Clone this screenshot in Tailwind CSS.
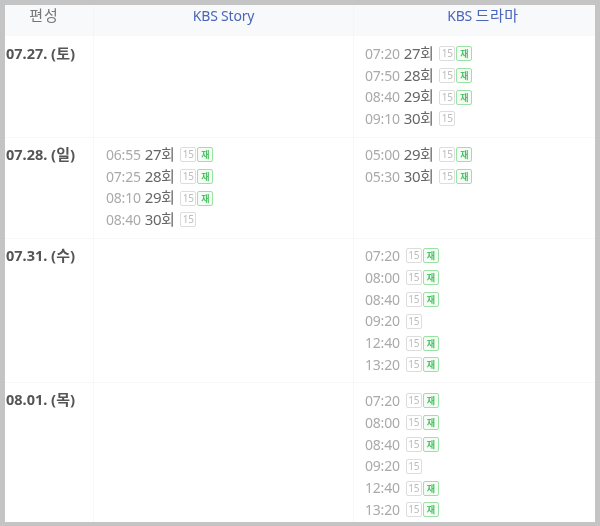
<!DOCTYPE html>
<html lang="ko"><head><meta charset="utf-8"><script src="https://cdn.jsdelivr.net/npm/@tailwindcss/browser@4"></script></head>
<body class="m-0 bg-[#c4c4c4]">
<div class="w-[600px] h-[526px] overflow-hidden pt-[5px] pl-[5px] pr-[5px] pb-[4px] font-['Noto_Sans','Noto_Sans_CJK_KR',sans-serif] text-[14px] leading-[21.7px] tracking-[-0.2px]">
<div class="bg-white h-full overflow-hidden blur-[0.5px] grid grid-cols-[89px_260px_241px] grid-rows-[31px_102px_101px_144px_140px]">
  <div class="bg-[#f8f9fb] border-r border-[#f4f5f7] text-center text-[#777] pr-[10px] text-[15px] tracking-[1px]">편성</div>
  <div class="bg-[#f8f9fb] border-r border-[#f4f5f7] text-center text-[#4a66b8]">KBS Story</div>
  <div class="bg-[#f8f9fb] text-center text-[#4a66b8] pl-[17px]">KBS <span class="text-[15px] tracking-[0.6px]">드라마</span></div>

  <div class="border-r border-b border-[#f7f7f7] pl-[1px] pt-[7px] font-bold text-[#555] text-[14.5px] tracking-[0px]">07.27. <span class="text-[15px]">(토)</span></div>
  <div class="border-r border-b border-[#f7f7f7]"></div>
  <div class="border-b border-[#f7f7f7] pl-[11px] pt-[7px]">
    <div class="flex items-center h-[21.7px]"><span class="text-[#aaa]">07:20</span><span class="text-[#666] ml-[4px] text-[15px] tracking-[-0.5px]">27회</span><span class="ml-[6px] flex gap-[1px]"><span class="w-[16px] h-[15px] border border-[#ddd] rounded-[2px] text-[#bbb] text-[10px] leading-[13px] text-center">15</span><span class="w-[16px] h-[15px] border border-[#9be3a5] bg-[#f4fcf5] rounded-[2px] text-[#4cc064] text-[9px] font-bold leading-[13px] text-center">재</span></span></div>
    <div class="flex items-center h-[21.7px]"><span class="text-[#aaa]">07:50</span><span class="text-[#666] ml-[4px] text-[15px] tracking-[-0.5px]">28회</span><span class="ml-[6px] flex gap-[1px]"><span class="w-[16px] h-[15px] border border-[#ddd] rounded-[2px] text-[#bbb] text-[10px] leading-[13px] text-center">15</span><span class="w-[16px] h-[15px] border border-[#9be3a5] bg-[#f4fcf5] rounded-[2px] text-[#4cc064] text-[9px] font-bold leading-[13px] text-center">재</span></span></div>
    <div class="flex items-center h-[21.7px]"><span class="text-[#aaa]">08:40</span><span class="text-[#666] ml-[4px] text-[15px] tracking-[-0.5px]">29회</span><span class="ml-[6px] flex gap-[1px]"><span class="w-[16px] h-[15px] border border-[#ddd] rounded-[2px] text-[#bbb] text-[10px] leading-[13px] text-center">15</span><span class="w-[16px] h-[15px] border border-[#9be3a5] bg-[#f4fcf5] rounded-[2px] text-[#4cc064] text-[9px] font-bold leading-[13px] text-center">재</span></span></div>
    <div class="flex items-center h-[21.7px]"><span class="text-[#aaa]">09:10</span><span class="text-[#666] ml-[4px] text-[15px] tracking-[-0.5px]">30회</span><span class="ml-[6px] flex gap-[1px]"><span class="w-[16px] h-[15px] border border-[#ddd] rounded-[2px] text-[#bbb] text-[10px] leading-[13px] text-center">15</span></span></div>
  </div>

  <div class="border-r border-b border-[#f7f7f7] pl-[1px] pt-[6px] font-bold text-[#555] text-[14.5px] tracking-[0px]">07.28. <span class="text-[15px]">(일)</span></div>
  <div class="border-r border-b border-[#f7f7f7] pl-[12px] pt-[6px]">
    <div class="flex items-center h-[21.7px]"><span class="text-[#aaa]">06:55</span><span class="text-[#666] ml-[4px] text-[15px] tracking-[-0.5px]">27회</span><span class="ml-[6px] flex gap-[1px]"><span class="w-[16px] h-[15px] border border-[#ddd] rounded-[2px] text-[#bbb] text-[10px] leading-[13px] text-center">15</span><span class="w-[16px] h-[15px] border border-[#9be3a5] bg-[#f4fcf5] rounded-[2px] text-[#4cc064] text-[9px] font-bold leading-[13px] text-center">재</span></span></div>
    <div class="flex items-center h-[21.7px]"><span class="text-[#aaa]">07:25</span><span class="text-[#666] ml-[4px] text-[15px] tracking-[-0.5px]">28회</span><span class="ml-[6px] flex gap-[1px]"><span class="w-[16px] h-[15px] border border-[#ddd] rounded-[2px] text-[#bbb] text-[10px] leading-[13px] text-center">15</span><span class="w-[16px] h-[15px] border border-[#9be3a5] bg-[#f4fcf5] rounded-[2px] text-[#4cc064] text-[9px] font-bold leading-[13px] text-center">재</span></span></div>
    <div class="flex items-center h-[21.7px]"><span class="text-[#aaa]">08:10</span><span class="text-[#666] ml-[4px] text-[15px] tracking-[-0.5px]">29회</span><span class="ml-[6px] flex gap-[1px]"><span class="w-[16px] h-[15px] border border-[#ddd] rounded-[2px] text-[#bbb] text-[10px] leading-[13px] text-center">15</span><span class="w-[16px] h-[15px] border border-[#9be3a5] bg-[#f4fcf5] rounded-[2px] text-[#4cc064] text-[9px] font-bold leading-[13px] text-center">재</span></span></div>
    <div class="flex items-center h-[21.7px]"><span class="text-[#aaa]">08:40</span><span class="text-[#666] ml-[4px] text-[15px] tracking-[-0.5px]">30회</span><span class="ml-[6px] flex gap-[1px]"><span class="w-[16px] h-[15px] border border-[#ddd] rounded-[2px] text-[#bbb] text-[10px] leading-[13px] text-center">15</span></span></div>
  </div>
  <div class="border-b border-[#f7f7f7] pl-[11px] pt-[6px]">
    <div class="flex items-center h-[21.7px]"><span class="text-[#aaa]">05:00</span><span class="text-[#666] ml-[4px] text-[15px] tracking-[-0.5px]">29회</span><span class="ml-[6px] flex gap-[1px]"><span class="w-[16px] h-[15px] border border-[#ddd] rounded-[2px] text-[#bbb] text-[10px] leading-[13px] text-center">15</span><span class="w-[16px] h-[15px] border border-[#9be3a5] bg-[#f4fcf5] rounded-[2px] text-[#4cc064] text-[9px] font-bold leading-[13px] text-center">재</span></span></div>
    <div class="flex items-center h-[21.7px]"><span class="text-[#aaa]">05:30</span><span class="text-[#666] ml-[4px] text-[15px] tracking-[-0.5px]">30회</span><span class="ml-[6px] flex gap-[1px]"><span class="w-[16px] h-[15px] border border-[#ddd] rounded-[2px] text-[#bbb] text-[10px] leading-[13px] text-center">15</span><span class="w-[16px] h-[15px] border border-[#9be3a5] bg-[#f4fcf5] rounded-[2px] text-[#4cc064] text-[9px] font-bold leading-[13px] text-center">재</span></span></div>
  </div>

  <div class="border-r border-b border-[#f7f7f7] pl-[1px] pt-[6px] font-bold text-[#555] text-[14.5px] tracking-[0px]">07.31. <span class="text-[15px]">(수)</span></div>
  <div class="border-r border-b border-[#f7f7f7]"></div>
  <div class="border-b border-[#f7f7f7] pl-[11px] pt-[6px]">
    <div class="flex items-center h-[21.8px]"><span class="text-[#aaa]">07:20</span><span class="ml-[6px] flex gap-[1px]"><span class="w-[16px] h-[15px] border border-[#ddd] rounded-[2px] text-[#bbb] text-[10px] leading-[13px] text-center">15</span><span class="w-[16px] h-[15px] border border-[#9be3a5] bg-[#f4fcf5] rounded-[2px] text-[#4cc064] text-[9px] font-bold leading-[13px] text-center">재</span></span></div>
    <div class="flex items-center h-[21.8px]"><span class="text-[#aaa]">08:00</span><span class="ml-[6px] flex gap-[1px]"><span class="w-[16px] h-[15px] border border-[#ddd] rounded-[2px] text-[#bbb] text-[10px] leading-[13px] text-center">15</span><span class="w-[16px] h-[15px] border border-[#9be3a5] bg-[#f4fcf5] rounded-[2px] text-[#4cc064] text-[9px] font-bold leading-[13px] text-center">재</span></span></div>
    <div class="flex items-center h-[21.8px]"><span class="text-[#aaa]">08:40</span><span class="ml-[6px] flex gap-[1px]"><span class="w-[16px] h-[15px] border border-[#ddd] rounded-[2px] text-[#bbb] text-[10px] leading-[13px] text-center">15</span><span class="w-[16px] h-[15px] border border-[#9be3a5] bg-[#f4fcf5] rounded-[2px] text-[#4cc064] text-[9px] font-bold leading-[13px] text-center">재</span></span></div>
    <div class="flex items-center h-[21.8px]"><span class="text-[#aaa]">09:20</span><span class="ml-[6px] flex gap-[1px]"><span class="w-[16px] h-[15px] border border-[#ddd] rounded-[2px] text-[#bbb] text-[10px] leading-[13px] text-center">15</span></span></div>
    <div class="flex items-center h-[21.8px]"><span class="text-[#aaa]">12:40</span><span class="ml-[6px] flex gap-[1px]"><span class="w-[16px] h-[15px] border border-[#ddd] rounded-[2px] text-[#bbb] text-[10px] leading-[13px] text-center">15</span><span class="w-[16px] h-[15px] border border-[#9be3a5] bg-[#f4fcf5] rounded-[2px] text-[#4cc064] text-[9px] font-bold leading-[13px] text-center">재</span></span></div>
    <div class="flex items-center h-[21.8px]"><span class="text-[#aaa]">13:20</span><span class="ml-[6px] flex gap-[1px]"><span class="w-[16px] h-[15px] border border-[#ddd] rounded-[2px] text-[#bbb] text-[10px] leading-[13px] text-center">15</span><span class="w-[16px] h-[15px] border border-[#9be3a5] bg-[#f4fcf5] rounded-[2px] text-[#4cc064] text-[9px] font-bold leading-[13px] text-center">재</span></span></div>
  </div>

  <div class="border-r border-[#f7f7f7] pl-[1px] pt-[6px] font-bold text-[#555] text-[14.5px] tracking-[0px]">08.01. <span class="text-[15px]">(목)</span></div>
  <div class="border-r border-[#f7f7f7]"></div>
  <div class="pl-[11px] pt-[7px]">
    <div class="flex items-center h-[21.8px]"><span class="text-[#aaa]">07:20</span><span class="ml-[6px] flex gap-[1px]"><span class="w-[16px] h-[15px] border border-[#ddd] rounded-[2px] text-[#bbb] text-[10px] leading-[13px] text-center">15</span><span class="w-[16px] h-[15px] border border-[#9be3a5] bg-[#f4fcf5] rounded-[2px] text-[#4cc064] text-[9px] font-bold leading-[13px] text-center">재</span></span></div>
    <div class="flex items-center h-[21.8px]"><span class="text-[#aaa]">08:00</span><span class="ml-[6px] flex gap-[1px]"><span class="w-[16px] h-[15px] border border-[#ddd] rounded-[2px] text-[#bbb] text-[10px] leading-[13px] text-center">15</span><span class="w-[16px] h-[15px] border border-[#9be3a5] bg-[#f4fcf5] rounded-[2px] text-[#4cc064] text-[9px] font-bold leading-[13px] text-center">재</span></span></div>
    <div class="flex items-center h-[21.8px]"><span class="text-[#aaa]">08:40</span><span class="ml-[6px] flex gap-[1px]"><span class="w-[16px] h-[15px] border border-[#ddd] rounded-[2px] text-[#bbb] text-[10px] leading-[13px] text-center">15</span><span class="w-[16px] h-[15px] border border-[#9be3a5] bg-[#f4fcf5] rounded-[2px] text-[#4cc064] text-[9px] font-bold leading-[13px] text-center">재</span></span></div>
    <div class="flex items-center h-[21.8px]"><span class="text-[#aaa]">09:20</span><span class="ml-[6px] flex gap-[1px]"><span class="w-[16px] h-[15px] border border-[#ddd] rounded-[2px] text-[#bbb] text-[10px] leading-[13px] text-center">15</span></span></div>
    <div class="flex items-center h-[21.8px]"><span class="text-[#aaa]">12:40</span><span class="ml-[6px] flex gap-[1px]"><span class="w-[16px] h-[15px] border border-[#ddd] rounded-[2px] text-[#bbb] text-[10px] leading-[13px] text-center">15</span><span class="w-[16px] h-[15px] border border-[#9be3a5] bg-[#f4fcf5] rounded-[2px] text-[#4cc064] text-[9px] font-bold leading-[13px] text-center">재</span></span></div>
    <div class="flex items-center h-[21.8px]"><span class="text-[#aaa]">13:20</span><span class="ml-[6px] flex gap-[1px]"><span class="w-[16px] h-[15px] border border-[#ddd] rounded-[2px] text-[#bbb] text-[10px] leading-[13px] text-center">15</span><span class="w-[16px] h-[15px] border border-[#9be3a5] bg-[#f4fcf5] rounded-[2px] text-[#4cc064] text-[9px] font-bold leading-[13px] text-center">재</span></span></div>
  </div>
</div>
</div>
</body></html>
